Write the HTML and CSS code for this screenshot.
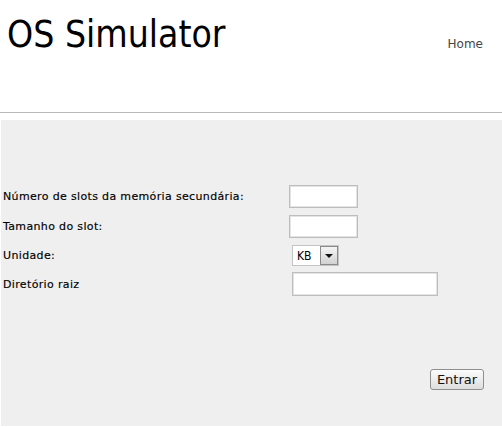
FILE: index.html
```html
<!DOCTYPE html>
<html lang="pt">
<head>
<meta charset="utf-8">
<title>OS Simulator</title>
<link rel="stylesheet" href="styles.css">
</head>
<body>
<header class="site-header">
  <h1 class="site-title">OS Simulator</h1>
  <nav class="site-nav"><a href="#" class="nav-link">Home</a></nav>
</header>
<main class="panel">
  <form class="config-form">
    <div class="form-row row-1">
      <label class="form-label" for="slots">Número de slots da memória secundária:</label>
      <input class="text-input small" id="slots" type="text">
    </div>
    <div class="form-row row-2">
      <label class="form-label" for="tamanho">Tamanho do slot:</label>
      <input class="text-input small" id="tamanho" type="text">
    </div>
    <div class="form-row row-3">
      <label class="form-label" for="unidade">Unidade:</label>
      <div class="select-wrap">
        <select class="unit-select" id="unidade">
          <option>KB</option>
          <option>MB</option>
        </select>
        <span class="select-arrow"><span class="arrow-tri"></span></span>
      </div>
    </div>
    <div class="form-row row-4">
      <label class="form-label" for="raiz">Diretório raiz</label>
      <input class="text-input wide" id="raiz" type="text">
    </div>
    <div class="form-actions">
      <button class="submit-btn" type="submit">Entrar</button>
    </div>
  </form>
</main>
</body>
</html>
```

FILE: styles.css
```css
html, body {
  margin: 0;
  padding: 0;
  background: #ffffff;
}

body {
  font-family: "DejaVu Sans", Verdana, sans-serif;
  color: #111111;
}

.site-header {
  display: flex;
  justify-content: space-between;
  align-items: flex-start;
  height: 112px;
  border-bottom: 1px solid #b9b9b9;
}

.site-title {
  margin: 13px 0 0 7px;
  font-family: "DejaVu Sans Condensed", "DejaVu Sans", sans-serif;
  font-stretch: condensed;
  font-weight: normal;
  font-size: 37px;
  line-height: normal;
  color: #000000;
}

.site-nav {
  margin: 37px 19px 0 0;
  font-size: 12px;
  line-height: normal;
}

.nav-link {
  color: #454545;
  text-decoration: none;
}

.panel {
  display: block;
  margin: 7px 0 0 1px;
  height: 306px;
  box-sizing: border-box;
  padding-top: 65px;
  background: #efefef;
}

.config-form {
  display: flex;
  flex-direction: column;
}

.form-row {
  display: flex;
  align-items: center;
}

.row-2 { margin-top: 7px; }
.row-3 { margin-top: 7px; }
.row-4 { margin-top: 6px; }

.form-label {
  width: 286px;
  padding-left: 2px;
  flex: none;
  font-size: 11px;
  letter-spacing: 0.35px;
  color: #000000;
  -webkit-text-stroke: 0.15px #000000;
}

.text-input {
  box-sizing: border-box;
  margin: 0;
  padding: 0 3px;
  background: #ffffff;
  border: 1px solid #bdbdbd;
  box-shadow: inset 0 0 0 1px #e4e4e4;
  font-family: "DejaVu Sans", sans-serif;
  font-size: 12px;
  outline: none;
}

.text-input.small {
  width: 69px;
  height: 23px;
}

.text-input.wide {
  margin-left: 3px;
  width: 146px;
  height: 24px;
}

.select-wrap {
  margin-left: 3px;
  display: flex;
  width: 47px;
  height: 21px;
  box-sizing: border-box;
  border: 1px solid #c4c4c4;
  background: #ffffff;
}

.unit-select {
  appearance: none;
  -webkit-appearance: none;
  flex: 1;
  min-width: 0;
  margin: 0;
  border: none;
  padding: 0 0 0 4px;
  background: #ffffff;
  font-family: "DejaVu Sans Condensed", "DejaVu Sans", sans-serif;
  font-stretch: condensed;
  font-size: 12px;
  color: #000000;
  outline: none;
}

.select-arrow {
  width: 18px;
  flex: none;
  box-sizing: border-box;
  border: 1px solid #8a8a8a;
  background: linear-gradient(#f4f4f4, #d2d2d2);
  display: flex;
  align-items: center;
  justify-content: center;
}

.arrow-tri {
  width: 0;
  height: 0;
  border-left: 4px solid transparent;
  border-right: 4px solid transparent;
  border-top: 4px solid #111111;
}

.form-actions {
  display: flex;
  justify-content: flex-end;
  margin-top: 73px;
  padding-right: 18px;
}

.submit-btn {
  width: 54px;
  height: 21px;
  margin: 0;
  padding: 0;
  box-sizing: border-box;
  border: 1px solid #8f8f8f;
  border-radius: 3px;
  background: linear-gradient(#fbfbfb, #dedede);
  font-family: "DejaVu Sans", sans-serif;
  font-size: 13px;
  color: #111111;
  line-height: 1;
}
```
